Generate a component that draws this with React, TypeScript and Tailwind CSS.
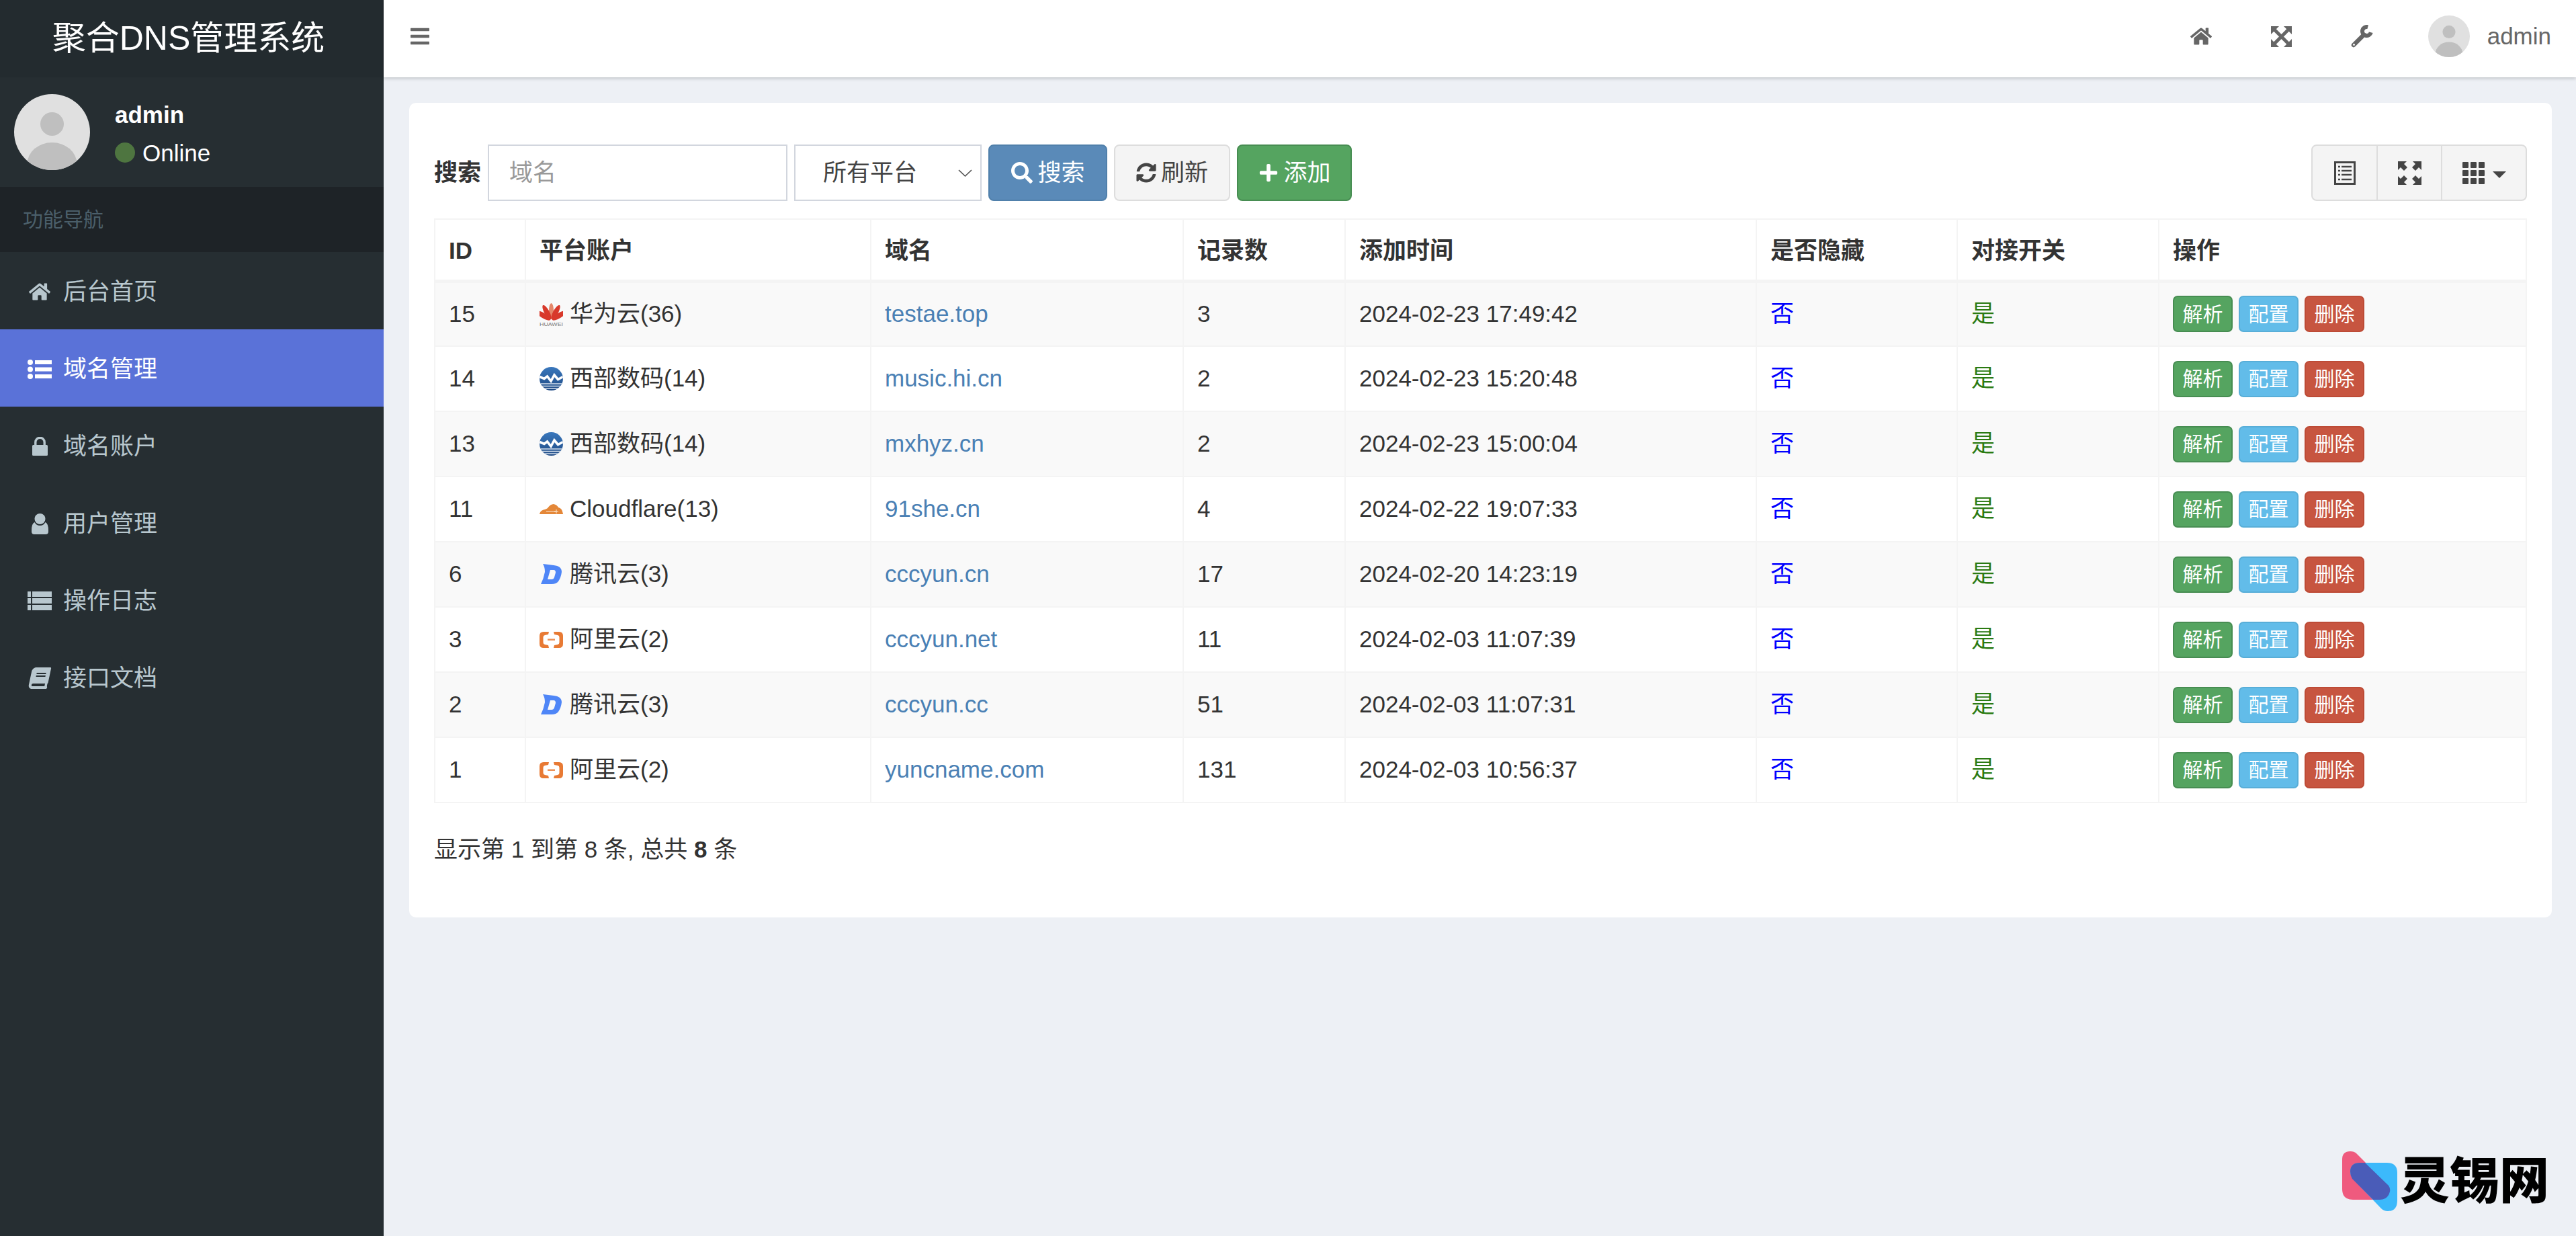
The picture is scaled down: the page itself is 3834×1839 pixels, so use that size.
import { FaBars, FaBook, FaHome, FaPlus, FaSearch, FaSyncAlt } from "react-icons/fa";

type Platform = "huawei" | "west" | "cloudflare" | "dnspod" | "aliyun";

interface DomainRow {
  id: number;
  platform: Platform;
  account: string;
  domain: string;
  records: number;
  time: string;
}

const rows: DomainRow[] = [
  { id: 15, platform: "huawei", account: "华为云(36)", domain: "testae.top", records: 3, time: "2024-02-23 17:49:42" },
  { id: 14, platform: "west", account: "西部数码(14)", domain: "music.hi.cn", records: 2, time: "2024-02-23 15:20:48" },
  { id: 13, platform: "west", account: "西部数码(14)", domain: "mxhyz.cn", records: 2, time: "2024-02-23 15:00:04" },
  { id: 11, platform: "cloudflare", account: "Cloudflare(13)", domain: "91she.cn", records: 4, time: "2024-02-22 19:07:33" },
  { id: 6, platform: "dnspod", account: "腾讯云(3)", domain: "cccyun.cn", records: 17, time: "2024-02-20 14:23:19" },
  { id: 3, platform: "aliyun", account: "阿里云(2)", domain: "cccyun.net", records: 11, time: "2024-02-03 11:07:39" },
  { id: 2, platform: "dnspod", account: "腾讯云(3)", domain: "cccyun.cc", records: 51, time: "2024-02-03 11:07:31" },
  { id: 1, platform: "aliyun", account: "阿里云(2)", domain: "yuncname.com", records: 131, time: "2024-02-03 10:56:37" },
];

function ListUlIcon() {
  return (
    <svg viewBox="0 0 36 29" className="w-[36px] h-[29px]" fill="currentColor">
      <circle cx="4" cy="4" r="4" />
      <circle cx="4" cy="14.5" r="4" />
      <circle cx="4" cy="25" r="4" />
      <rect x="11" y="1" width="25" height="6" />
      <rect x="11" y="11.5" width="25" height="6" />
      <rect x="11" y="22" width="25" height="6" />
    </svg>
  );
}

function ThListIcon() {
  return (
    <svg viewBox="0 0 36 28" className="w-[36px] h-[28px]" fill="currentColor">
      <rect width="5" height="8" />
      <rect y="10" width="5" height="8" />
      <rect y="20" width="5" height="8" />
      <rect x="7" width="29" height="8" />
      <rect x="7" y="10" width="29" height="8" />
      <rect x="7" y="20" width="29" height="8" />
    </svg>
  );
}

function LockIcon() {
  return (
    <svg viewBox="0 0 23 28" className="w-[23px] h-[28px]" fill="currentColor">
      <rect y="12" width="23" height="16" rx="1.5" />
      <path d="M4.8 13 V8 A6.7 6.7 0 0 1 18.2 8 V13" fill="none" stroke="currentColor" strokeWidth="3.4" />
    </svg>
  );
}

function UserIcon() {
  return (
    <svg viewBox="0 0 25 31" className="w-[25px] h-[31px]" fill="currentColor">
      <circle cx="12.5" cy="8" r="8" />
      <path d="M4.5 13 Q7 18 12.5 18 Q18 18 20.5 13 Q25 15 25 25 V27 Q25 31 21 31 H4 Q0 31 0 27 V25 Q0 15 4.5 13Z" />
    </svg>
  );
}

function ArrowsAltIcon() {
  return (
    <svg viewBox="0 0 31 31" className="w-[31px] h-[31px]" fill="currentColor">
      <path d="M0 0 H12 L0 12Z M31 0 H19 L31 12Z M0 31 H12 L0 19Z M31 31 H19 L31 19Z" />
      <path d="M5 5 L26 26 M26 5 L5 26" stroke="currentColor" strokeWidth="5" />
    </svg>
  );
}

function WrenchIcon() {
  return (
    <svg viewBox="0 0 34 34" className="w-[34px] h-[34px]" fill="none" stroke="currentColor">
      <path d="M4 30 L19 15" strokeWidth="6.5" strokeLinecap="round" />
      <path d="M25.2 3.2 A6.5 6.5 0 1 0 29.8 11.2" strokeWidth="6" />
      <circle cx="4.5" cy="29.5" r="1.4" fill="#fff" stroke="none" />
    </svg>
  );
}

const navItems = [
  { label: "后台首页", icon: <FaHome size={32} /> },
  { label: "域名管理", icon: <ListUlIcon />, active: true },
  { label: "域名账户", icon: <LockIcon /> },
  { label: "用户管理", icon: <UserIcon /> },
  { label: "操作日志", icon: <ThListIcon /> },
  { label: "接口文档", icon: <FaBook size={32} className="-skew-x-12" /> },
];

function Avatar({ className }: { className: string }) {
  return (
    <svg viewBox="0 0 113 113" className={className}>
      <defs>
        <clipPath id="avatar-clip">
          <circle cx="56.5" cy="56.5" r="56.5" />
        </clipPath>
      </defs>
      <circle cx="56.5" cy="56.5" r="56.5" fill="#e0e0e0" />
      <ellipse cx="56.5" cy="44.5" rx="17.5" ry="17.5" fill="#bfbfbf" />
      <ellipse cx="56.5" cy="104" rx="37" ry="32" fill="#bfbfbf" clipPath="url(#avatar-clip)" />
    </svg>
  );
}

function PlatformIcon({ platform }: { platform: Platform }) {
  if (platform === "huawei") {
    return (
      <svg viewBox="0 0 35 35" className="w-[35px] h-[35px] shrink-0">
        <g fill="#d8392b">
          <ellipse cx="17.5" cy="13" rx="3.6" ry="12" fill="#e5876a" />
          <ellipse cx="17.5" cy="13" rx="3.8" ry="12" transform="rotate(-28 17.5 27)" />
          <ellipse cx="17.5" cy="13" rx="3.8" ry="12" transform="rotate(28 17.5 27)" />
          <ellipse cx="17.5" cy="13" rx="3.8" ry="12" transform="rotate(-58 17.5 27)" />
          <ellipse cx="17.5" cy="13" rx="3.8" ry="12" transform="rotate(58 17.5 27)" />
        </g>
        <text x="0" y="34.5" fontSize="6.5" fill="#777" textLength="35" lengthAdjust="spacingAndGlyphs">HUAWEI</text>
      </svg>
    );
  }
  if (platform === "west") {
    return (
      <svg viewBox="0 0 35 35" className="w-[35px] h-[35px] shrink-0">
        <defs>
          <clipPath id="west-clip">
            <circle cx="17.5" cy="17.5" r="17.5" />
          </clipPath>
          <linearGradient id="west-fill" x1="0" y1="0" x2="0" y2="1">
            <stop offset="0" stopColor="#3a78bd" />
            <stop offset="1" stopColor="#1f4a84" />
          </linearGradient>
        </defs>
        <circle cx="17.5" cy="17.5" r="17.5" fill="url(#west-fill)" />
        <g clipPath="url(#west-clip)" fill="none" stroke="#fff">
          <path d="M0 14.5 L7 17.5 L11.5 14 L17 21 L22 12 L27.5 18.5 L35 14.5" strokeWidth="3.6" />
          <path d="M0 25 H35 M0 28.5 H35 M0 32 H35" strokeWidth="1.3" stroke="#d6e1ee" />
        </g>
      </svg>
    );
  }
  if (platform === "cloudflare") {
    return (
      <svg viewBox="0 0 35 16" className="w-[35px] h-[16px] my-[9px] shrink-0">
        <path d="M0 15 Q1 9 8 8 Q11 7 12 6 Q16 0 21 0 Q26 1 28 5 Q34 6 35 15Z" fill="#e48738" />
        <path d="M10 11 H24 M25 8 V14 M22 11 H28" stroke="#fbe9d5" strokeWidth="1" />
      </svg>
    );
  }
  if (platform === "dnspod") {
    return (
      <svg viewBox="0 0 35 35" className="w-[35px] h-[35px] shrink-0">
        <path fillRule="evenodd" d="M5 2 L21 4 Q33 5 33 14 Q32 22 28 28 Q25 32 18 32 H2 Q6 24 8 14 Q8 7 5 2Z M16 11 L12 25 H18 Q21 25 22 22 L24 15 Q24 11 21 11Z" fill="#4f86f7" />
      </svg>
    );
  }
  return (
    <svg viewBox="0 0 35 24" className="w-[35px] h-[24px] my-[5px] shrink-0">
      <path d="M14 0 H6 Q0 0 0 6 V18 Q0 24 6 24 H14 L13 20 L8 19 Q5.5 18.5 5.5 16 V8 Q5.5 5.5 8 5 L13 4Z" fill="#e87a34" />
      <path d="M21 0 H29 Q35 0 35 6 V18 Q35 24 29 24 H21 L22 20 L27 19 Q29.5 18.5 29.5 16 V8 Q29.5 5.5 27 5 L22 4Z" fill="#e87a34" />
      <rect x="12" y="10.5" width="11" height="2.5" fill="#ec925a" />
    </svg>
  );
}

function Header() {
  return (
    <header className="h-[115px] pb-[7px] bg-white shadow-[0_2px_5px_rgba(0,0,0,0.18)] flex items-center justify-between">
      <FaBars size={32} className="ml-[38px] text-[#666]" />
      <div className="flex items-center text-[#666] pr-[37px]">
        <div className="w-[120px] flex justify-center"><FaHome size={32} /></div>
        <div className="w-[120px] flex justify-center"><ArrowsAltIcon /></div>
        <div className="w-[120px] flex justify-center"><WrenchIcon /></div>
        <Avatar className="w-[62px] h-[62px] ml-[38px]" />
        <span className="ml-[26px] text-[35px]">admin</span>
      </div>
    </header>
  );
}

function Sidebar() {
  return (
    <aside className="w-[571px] shrink-0 bg-[#262e32]">
      <div className="h-[115px] pr-[10px] bg-[#232b2f] flex items-center justify-center text-white text-[50px]">聚合DNS管理系统</div>
      <div className="h-[163px] flex items-center pl-[21px]">
        <Avatar className="w-[113px] h-[113px]" />
        <div className="ml-[37px] pt-[4px] text-white text-[35px] leading-[57px]">
          <div className="font-bold">admin</div>
          <div className="flex items-center">
            <span className="w-[30px] h-[30px] rounded-full bg-[#4e7540] mr-[11px]" />
            Online
          </div>
        </div>
      </div>
      <div className="h-[97px] bg-[#1e2327] flex items-center pl-[34px] text-[30px] text-[#4b5f6a]">功能导航</div>
      <nav>
        {navItems.map((item) => (
          <div
            key={item.label}
            className={
              item.active
                ? "h-[115px] pt-[3px] flex items-center pl-[41px] text-[35px] bg-[#5a72d8] text-white"
                : "h-[115px] pt-[3px] flex items-center pl-[41px] text-[35px] text-[#b8c7ce]"
            }
          >
            <span className="w-[36px] mr-[17px] flex justify-center">{item.icon}</span>
            {item.label}
          </div>
        ))}
      </nav>
    </aside>
  );
}

function Toolbar() {
  return (
    <div className="flex items-center h-[84px] mb-[26px] text-[35px]">
      <span className="font-bold text-[#333] mr-[10px]">搜索</span>
      <input
        placeholder="域名"
        className="w-[446px] h-[84px] border-2 border-[#d2d6de] px-[30px] outline-none placeholder:text-[#999]"
      />
      <div className="relative ml-[10px]">
        <select className="appearance-none w-[279px] h-[84px] border-2 border-[#d2d6de] bg-white pl-[41px] text-[#444] outline-none">
          <option>所有平台</option>
        </select>
        <svg viewBox="0 0 21 11" className="absolute right-[14px] top-[37px] w-[21px] h-[11px]">
          <path d="M1 1 L10.5 10 L20 1" fill="none" stroke="#555" strokeWidth="1.6" />
        </svg>
      </div>
      <button className="ml-[10px] w-[177px] h-[84px] flex items-center justify-center gap-[8px] rounded-[8px] border-2 border-[#5080ab] bg-[#5a8ab8] text-white">
        <FaSearch size={32} />
        搜索
      </button>
      <button className="ml-[10px] w-[173px] h-[84px] flex items-center justify-center gap-[7px] rounded-[8px] border-2 border-[#ddd] bg-[#f4f4f4] text-[#444]">
        <FaSyncAlt size={30} />
        刷新
      </button>
      <button className="ml-[10px] w-[171px] h-[84px] flex items-center justify-center gap-[8px] rounded-[8px] border-2 border-[#478d52] bg-[#55a460] text-white">
        <FaPlus size={30} />
        添加
      </button>
      <div className="ml-auto flex h-[84px] rounded-[8px] border-2 border-[#ddd] bg-[#f4f4f4] text-[#444]">
        <div className="w-[97px] flex items-center justify-center border-r-2 border-[#ddd]">
          <svg viewBox="0 0 32 35" className="w-[32px] h-[35px]">
            <rect width="32" height="35" fill="#444" />
            <rect x="3" y="3" width="26" height="29" fill="#f4f4f4" />
            <path d="M6 8 H9 M11 8 H26 M6 14 H9 M11 14 H26 M6 20 H9 M11 20 H26 M6 27 H9 M11 27 H26" stroke="#444" strokeWidth="2.6" />
          </svg>
        </div>
        <div className="w-[96px] flex items-center justify-center border-r-2 border-[#ddd]">
          <svg viewBox="0 0 35 35" className="w-[35px] h-[35px]" fill="#444">
            <path d="M0 0 H13 L9 4 L14 9 L9 14 L4 9 L0 13Z" />
            <path d="M35 0 H22 L26 4 L21 9 L26 14 L31 9 L35 13Z" />
            <path d="M0 35 H13 L9 31 L14 26 L9 21 L4 26 L0 22Z" />
            <path d="M35 35 H22 L26 31 L21 26 L26 21 L31 26 L35 22Z" />
          </svg>
        </div>
        <div className="flex-1 w-[124px] flex items-center justify-center gap-[12px]">
          <svg viewBox="0 0 33 33" className="w-[33px] h-[33px]" fill="#444">
            <rect width="9" height="9" rx="1" />
            <rect x="12" width="9" height="9" rx="1" />
            <rect x="24" width="9" height="9" rx="1" />
            <rect y="12" width="9" height="9" rx="1" />
            <rect x="12" y="12" width="9" height="9" rx="1" />
            <rect x="24" y="12" width="9" height="9" rx="1" />
            <rect y="24" width="9" height="9" rx="1" />
            <rect x="12" y="24" width="9" height="9" rx="1" />
            <rect x="24" y="24" width="9" height="9" rx="1" />
          </svg>
          <svg viewBox="0 0 20 10" className="w-[20px] h-[10px] mt-[5px]" fill="#444">
            <path d="M0 0 H20 L10 10Z" />
          </svg>
        </div>
      </div>
    </div>
  );
}

function DomainTable() {
  const th = "border-2 border-[#f4f4f4] border-b-[5px] px-[20px] pt-[3px] text-left font-bold text-[#333]";
  const td = "border-2 border-[#f4f4f4] px-[20px]";
  return (
    <table className="w-full table-fixed border-collapse text-[35px] text-[#333]">
      <colgroup>
        <col className="w-[135px]" />
        <col className="w-[514px]" />
        <col className="w-[465px]" />
        <col className="w-[241px]" />
        <col className="w-[612px]" />
        <col className="w-[299px]" />
        <col className="w-[300px]" />
        <col />
      </colgroup>
      <thead>
        <tr className="h-[92px]">
          <th className={th}>ID</th>
          <th className={th}>平台账户</th>
          <th className={th}>域名</th>
          <th className={th}>记录数</th>
          <th className={th}>添加时间</th>
          <th className={th}>是否隐藏</th>
          <th className={th}>对接开关</th>
          <th className={th}>操作</th>
        </tr>
      </thead>
      <tbody>
        {rows.map((row, i) => (
          <tr key={row.id} className={i % 2 === 0 ? "h-[97px] bg-[#f9f9f9]" : "h-[97px] bg-white"}>
            <td className={td}>{row.id}</td>
            <td className={td}>
              <div className="flex items-center gap-[10px]">
                <PlatformIcon platform={row.platform} />
                {row.account}
              </div>
            </td>
            <td className={`${td} text-[#4a80b4]`}>{row.domain}</td>
            <td className={td}>{row.records}</td>
            <td className={td}>{row.time}</td>
            <td className={`${td} text-[#0000ff]`}>否</td>
            <td className={`${td} text-[#2a7a12]`}>是</td>
            <td className={td}>
              <div className="flex gap-[9px] text-[30px] text-white">
                <span className="w-[89px] h-[54px] flex items-center justify-center rounded-[7px] border-2 border-[#478d52] bg-[#55a460]">解析</span>
                <span className="w-[89px] h-[54px] flex items-center justify-center rounded-[7px] border-2 border-[#58aed8] bg-[#62bce9]">配置</span>
                <span className="w-[89px] h-[54px] flex items-center justify-center rounded-[7px] border-2 border-[#bd4b36] bg-[#c75540]">删除</span>
              </div>
            </td>
          </tr>
        ))}
      </tbody>
    </table>
  );
}

function Watermark() {
  return (
    <div className="absolute right-[40px] bottom-[37px] flex items-center">
      <svg viewBox="0 0 82 89" className="w-[82px] h-[89px]">
        <path d="M0 12 Q0 0 12 0 Q18 0 21 3 L69 51 L56 72 H16 Q0 72 0 56Z" fill="#ef5a7e" />
        <path d="M27 17 H67 Q82 17 82 32 V73 Q82 89 68 89 Q62 89 58 85 L16 41 Q12 36 12 30 Q12 17 27 17Z" fill="#3cb9fb" />
        <path d="M27 17 H34 L69 51 Q72 55 71 60 Q68 72 56 72 H46 L15 41 Q12 36 12 30 Q12 17 27 17Z" fill="#4a5cb8" />
      </svg>
      <span className="ml-[4px] text-[74px] leading-none font-black text-black">灵锡网</span>
    </div>
  );
}

export default function App() {
  return (
    <div className="relative min-h-screen flex bg-[#edf0f5] font-['Liberation_Sans','Noto_Sans_CJK_SC',sans-serif]">
      <Sidebar />
      <main className="flex-1">
        <Header />
        <section className="ml-[38px] mr-[36px] mt-[38px] rounded-[10px] bg-white px-[37px] pt-[62px] pb-[76px]">
          <Toolbar />
          <DomainTable />
          <div className="mt-[44px] h-[50px] flex items-center text-[35px] text-[#333] whitespace-pre">
            显示第 1 到第 8 条, 总共 <b>8</b> 条
          </div>
        </section>
      </main>
      <Watermark />
    </div>
  );
}
